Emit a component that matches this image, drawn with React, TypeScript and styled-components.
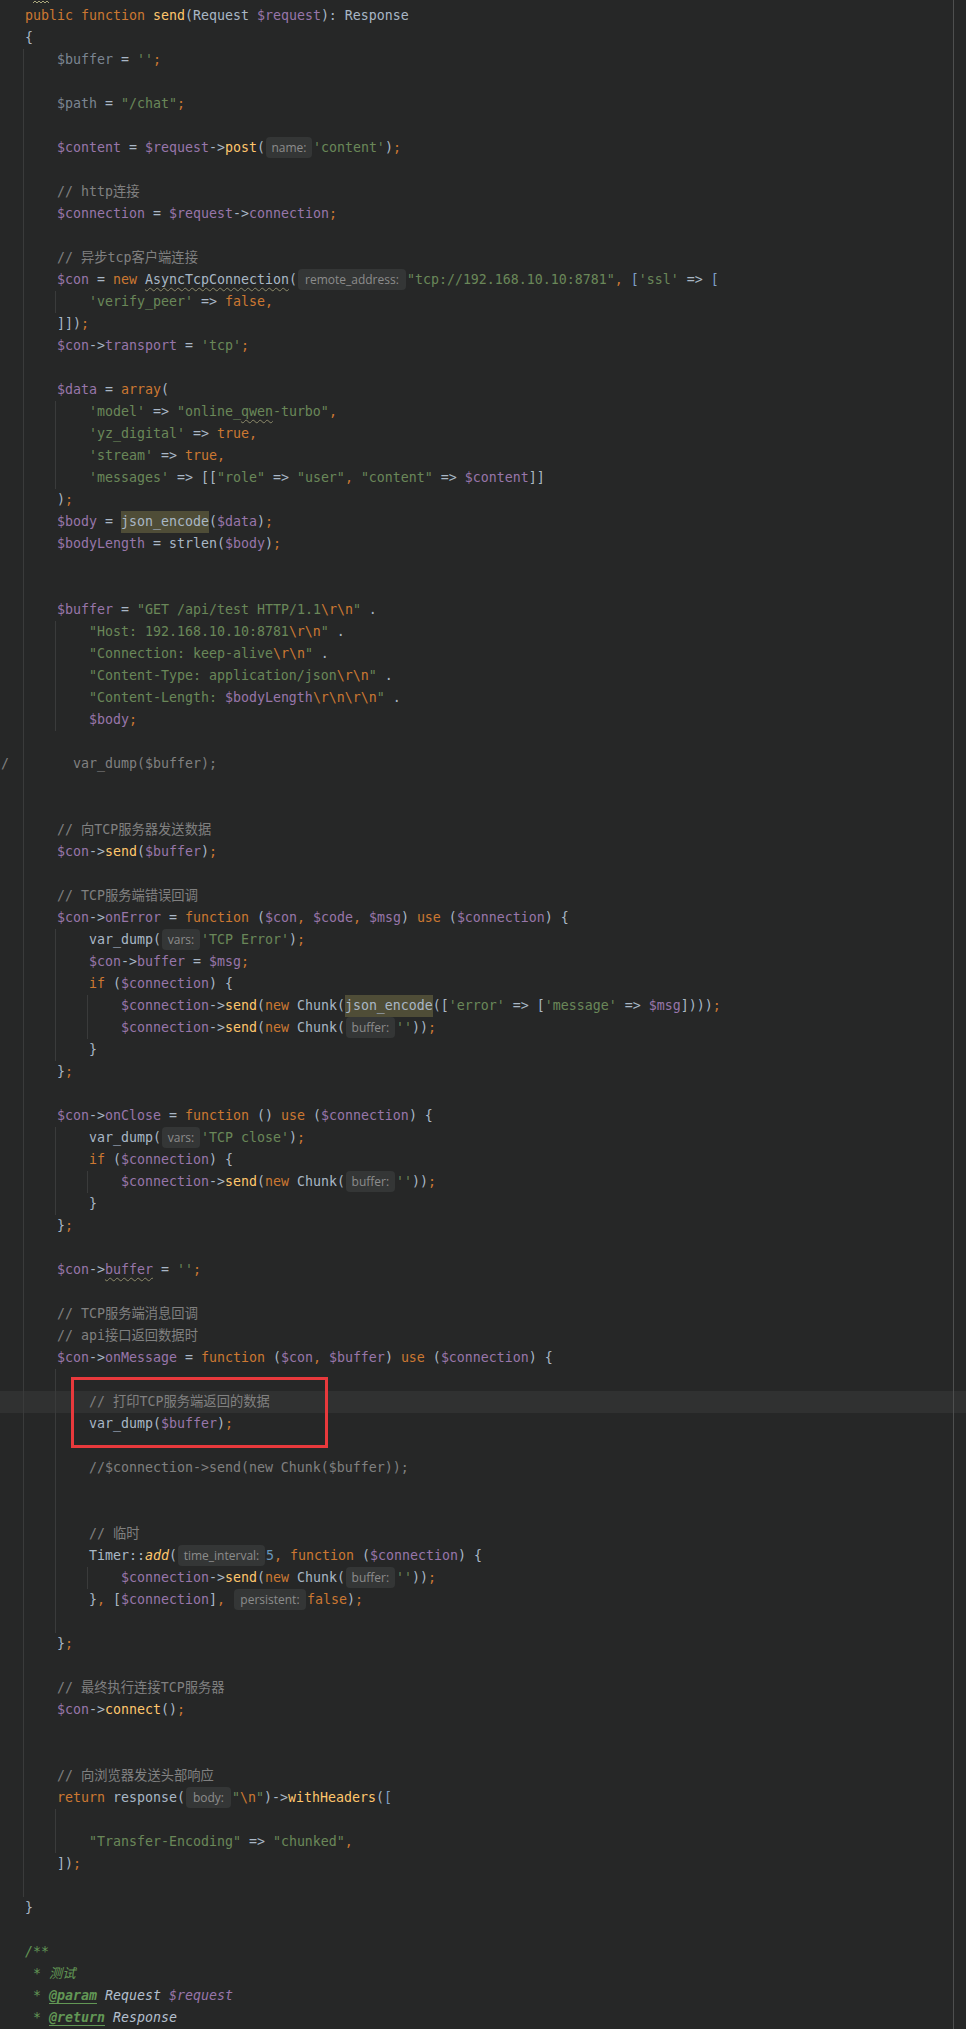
import React from 'react';
import styled, { createGlobalStyle, css } from 'styled-components';

const Global = createGlobalStyle`
  html, body { margin: 0; padding: 0; background: #262727; }
  body { width: 966px; overflow: hidden; }
`;

const Editor = styled.div`
  position: relative;
  width: 966px;
  height: 2029px;
  overflow: hidden;
  background: #262727;
  font-family: "DejaVu Sans Mono", "Noto Sans CJK SC", monospace;
  font-size: 13.29px;
  color: #a9b7c6;
  &::after {
    content: '';
    position: absolute;
    left: 953px;
    top: 0;
    bottom: 0;
    width: 1px;
    background: #4e4f4f;
  }
`;

const TopStrip = styled.div`
  height: 5px;
  display: flex;
  align-items: flex-start;
  padding-left: 33px;
`;

const Row = styled.div<{ $guides: number[]; $current?: boolean }>`
  height: 22px;
  line-height: 22px;
  padding-left: 1px;
  white-space: pre;
  background-color: ${(p) => (p.$current ? '#303131' : 'transparent')};
  background-image: ${(p) =>
    p.$guides.length ? p.$guides.map(() => 'linear-gradient(#3a3b3b, #3a3b3b)').join(', ') : 'none'};
  background-position: ${(p) => (p.$guides.length ? p.$guides.map((c) => `${c * 8 - 1}px 0`).join(', ') : '0 0')};
  background-size: 1px 100%;
  background-repeat: no-repeat;
`;

const colors: Record<string, string> = {
  k: '#cc7832',
  t: '#a9b7c6',
  v: '#9876aa',
  f: '#ffc66d',
  s: '#6a8759',
  c: '#808080',
  n: '#6897bb',
  u: '#7b8592',
  b: '#7f9fc6',
  i: '#ffc66d',
  w: '#a9b7c6',
  W: '#6a8759',
  X: '#9876aa',
  m: '#a9b7c6',
  d: '#629755',
  D: '#629755',
  I: '#b3bfcd',
  V: '#9876aa',
};

const Tok = styled.span<{ $k: string }>`
  color: ${(p) => colors[p.$k] || '#a9b7c6'};
  ${(p) =>
    (p.$k === 'i' || p.$k === 'd' || p.$k === 'I' || p.$k === 'V') &&
    css`
      font-style: italic;
    `}
  ${(p) =>
    p.$k === 'D' &&
    css`
      font-style: italic;
      font-weight: bold;
      text-decoration: underline;
      text-decoration-thickness: 1px;
      text-underline-offset: 3px;
    `}
  ${(p) =>
    (p.$k === 'w' || p.$k === 'W' || p.$k === 'X') &&
    css`
      text-decoration: underline wavy #8d8a6a;
      text-decoration-thickness: 1px;
      text-underline-offset: 3px;
    `}
  ${(p) =>
    p.$k === 'm' &&
    css`
      background: #4f4d37;
      display: inline-block;
      height: 22px;
      vertical-align: top;
    `}
`;

const Hint = styled.span<{ $w: number }>`
  display: inline-block;
  vertical-align: top;
  width: ${(p) => p.$w - 2}px;
  height: 21px;
  margin: 0 1px;
  border-radius: 4px;
  background: #343636;
  color: #8c8c8c;
  font-family: "Open Sans", "Noto Sans", sans-serif;
  font-size: 12px;
  line-height: 21px;
  text-align: center;
`;

const RedBox = styled.div`
  position: absolute;
  left: 71px;
  top: 1377px;
  width: 257px;
  height: 71px;
  box-sizing: border-box;
  border: 3px solid #e8393c;
  pointer-events: none;
`;

const hintWidths: Record<string, number> = {
  'name:': 48,
  'remote_address:': 110,
  'vars:': 40,
  'buffer:': 51,
  'time_interval:': 89,
  'persistent:': 74,
  'body:': 47,
};

type LineDef = { indent: number; toks: string[]; current?: boolean };
const L = (indent: number, ...toks: string[]): LineDef => ({ indent, toks });
const E = (): LineDef => ({ indent: 0, toks: [] });

const chunkEmpty = (ind: number) =>
  L(ind, 'v|$connection', 't|->', 'f|send', 't|(', 'k|new', 't| Chunk(', 'h|buffer:', "s|''", 't|))', 'k|;');

const lines: LineDef[] = [
  L(3, 'k|public', 't| ', 'k|function', 't| ', 'f|send', 't|(Request ', 'v|$request', 't|): Response'),
  L(3, 't|{'),
  L(7, 'u|$buffer', 't| = ', "s|''", 'k|;'),
  E(),
  L(7, 'u|$path', 't| = ', 's|"/chat"', 'k|;'),
  E(),
  L(7, 'v|$content', 't| = ', 'v|$request', 't|->', 'f|post', 't|(', 'h|name:', "s|'content'", 't|)', 'k|;'),
  E(),
  L(7, 'c|// http连接'),
  L(7, 'v|$connection', 't| = ', 'v|$request', 't|->', 'v|connection', 'k|;'),
  E(),
  L(7, 'c|// 异步tcp客户端连接'),
  L(
    7,
    'v|$con',
    't| = ',
    'k|new',
    't| ',
    'w|AsyncTcpConnection',
    't|(',
    'h|remote_address:',
    's|"tcp://192.168.10.10:8781"',
    'k|,',
    't| ',
    'b|[',
    "s|'ssl'",
    't| => ',
    'b|['
  ),
  L(11, "s|'verify_peer'", 't| => ', 'k|false', 'k|,'),
  L(7, 't|]])', 'k|;'),
  L(7, 'v|$con', 't|->', 'v|transport', 't| = ', "s|'tcp'", 'k|;'),
  E(),
  L(7, 'v|$data', 't| = ', 'k|array', 't|('),
  L(11, "s|'model'", 't| => ', 's|"online_', 'W|qwen', 's|-turbo"', 'k|,'),
  L(11, "s|'yz_digital'", 't| => ', 'k|true', 'k|,'),
  L(11, "s|'stream'", 't| => ', 'k|true', 'k|,'),
  L(
    11,
    "s|'messages'",
    't| => [[',
    's|"role"',
    't| => ',
    's|"user"',
    'k|,',
    't| ',
    's|"content"',
    't| => ',
    'v|$content',
    't|]]'
  ),
  L(7, 't|)', 'k|;'),
  L(7, 'v|$body', 't| = ', 'm|json_encode', 't|(', 'v|$data', 't|)', 'k|;'),
  L(7, 'v|$bodyLength', 't| = ', 't|strlen(', 'v|$body', 't|)', 'k|;'),
  E(),
  E(),
  L(7, 'v|$buffer', 't| = ', 's|"GET /api/test HTTP/1.1', 'k|\\r\\n', 's|"', 't| .'),
  L(11, 's|"Host: 192.168.10.10:8781', 'k|\\r\\n', 's|"', 't| .'),
  L(11, 's|"Connection: keep-alive', 'k|\\r\\n', 's|"', 't| .'),
  L(11, 's|"Content-Type: application/json', 'k|\\r\\n', 's|"', 't| .'),
  L(11, 's|"Content-Length: ', 'v|$bodyLength', 'k|\\r\\n\\r\\n', 's|"', 't| .'),
  L(11, 'v|$body', 'k|;'),
  E(),
  L(0, 'c|/        var_dump($buffer);'),
  E(),
  E(),
  L(7, 'c|// 向TCP服务器发送数据'),
  L(7, 'v|$con', 't|->', 'f|send', 't|(', 'v|$buffer', 't|)', 'k|;'),
  E(),
  L(7, 'c|// TCP服务端错误回调'),
  L(
    7,
    'v|$con',
    't|->',
    'v|onError',
    't| = ',
    'k|function',
    't| (',
    'v|$con',
    'k|,',
    't| ',
    'v|$code',
    'k|,',
    't| ',
    'v|$msg',
    't|) ',
    'k|use',
    't| (',
    'v|$connection',
    't|) {'
  ),
  L(11, 't|var_dump(', 'h|vars:', "s|'TCP Error'", 't|)', 'k|;'),
  L(11, 'v|$con', 't|->', 'v|buffer', 't| = ', 'v|$msg', 'k|;'),
  L(11, 'k|if', 't| (', 'v|$connection', 't|) {'),
  L(
    15,
    'v|$connection',
    't|->',
    'f|send',
    't|(',
    'k|new',
    't| Chunk(',
    'm|json_encode',
    't|([',
    "s|'error'",
    't| => [',
    "s|'message'",
    't| => ',
    'v|$msg',
    't|])))',
    'k|;'
  ),
  chunkEmpty(15),
  L(11, 't|}'),
  L(7, 't|}', 'k|;'),
  E(),
  L(7, 'v|$con', 't|->', 'v|onClose', 't| = ', 'k|function', 't| () ', 'k|use', 't| (', 'v|$connection', 't|) {'),
  L(11, 't|var_dump(', 'h|vars:', "s|'TCP close'", 't|)', 'k|;'),
  L(11, 'k|if', 't| (', 'v|$connection', 't|) {'),
  chunkEmpty(15),
  L(11, 't|}'),
  L(7, 't|}', 'k|;'),
  E(),
  L(7, 'v|$con', 't|->', 'X|buffer', 't| = ', "s|''", 'k|;'),
  E(),
  L(7, 'c|// TCP服务端消息回调'),
  L(7, 'c|// api接口返回数据时'),
  L(
    7,
    'v|$con',
    't|->',
    'v|onMessage',
    't| = ',
    'k|function',
    't| (',
    'v|$con',
    'k|,',
    't| ',
    'v|$buffer',
    't|) ',
    'k|use',
    't| (',
    'v|$connection',
    't|) {'
  ),
  E(),
  { indent: 11, toks: ['c|// 打印TCP服务端返回的数据'], current: true },
  L(11, 't|var_dump(', 'v|$buffer', 't|)', 'k|;'),
  E(),
  L(11, 'c|//$connection->send(new Chunk($buffer));'),
  E(),
  E(),
  L(11, 'c|// 临时'),
  L(
    11,
    't|Timer::',
    'i|add',
    't|(',
    'h|time_interval:',
    'n|5',
    'k|,',
    't| ',
    'k|function',
    't| (',
    'v|$connection',
    't|) {'
  ),
  chunkEmpty(15),
  L(11, 't|}', 'k|,', 't| [', 'v|$connection', 't|]', 'k|,', 't| ', 'h|persistent:', 'k|false', 't|)', 'k|;'),
  E(),
  L(7, 't|}', 'k|;'),
  E(),
  L(7, 'c|// 最终执行连接TCP服务器'),
  L(7, 'v|$con', 't|->', 'f|connect', 't|()', 'k|;'),
  E(),
  E(),
  L(7, 'c|// 向浏览器发送头部响应'),
  L(7, 'k|return', 't| response(', 'h|body:', 's|"', 'k|\\n', 's|"', 't|)->', 'f|withHeaders', 't|(', 'b|['),
  E(),
  L(11, 's|"Transfer-Encoding"', 't| => ', 's|"chunked"', 'k|,'),
  L(7, 't|])', 'k|;'),
  E(),
  L(3, 't|}'),
  E(),
  L(3, 'd|/**'),
  L(4, 'd|* ', 'd|测试'),
  L(4, 'd|* ', 'D|@param', 't| ', 'I|Request', 't| ', 'V|$request'),
  L(4, 'd|* ', 'D|@return', 't| ', 'I|Response'),
];

const guideRanges: [number, number, number][] = [
  [3, 3, 86],
  [7, 14, 14],
  [7, 19, 22],
  [7, 29, 33],
  [7, 43, 48],
  [7, 52, 55],
  [7, 63, 74],
  [7, 83, 84],
  [11, 46, 47],
  [11, 54, 54],
  [11, 72, 72],
];

const guidesFor = (n: number) => guideRanges.filter(([, a, b]) => n >= a && n <= b).map(([c]) => c);

const Squiggle = () => (
  <svg width="17" height="5" viewBox="0 0 17 5">
    <polyline
      points="0,3 2,1 4,3 6,1 8,3 10,1 12,3 14,1 16,3"
      fill="none"
      stroke="#a8a57c"
      strokeWidth="1"
    />
  </svg>
);

const renderTok = (tok: string, key: number) => {
  const idx = tok.indexOf('|');
  const k = tok.slice(0, idx);
  const text = tok.slice(idx + 1);
  if (k === 'h') {
    return (
      <Hint key={key} $w={hintWidths[text] || 50}>
        {text}
      </Hint>
    );
  }
  return (
    <Tok key={key} $k={k}>
      {text}
    </Tok>
  );
};

export default function App() {
  return (
    <>
      <Global />
      <Editor>
        <TopStrip>
          <Squiggle />
        </TopStrip>
        {lines.map((ln, i) => (
          <Row key={i} $guides={guidesFor(i + 1)} $current={ln.current}>
            {ln.toks.length ? ' '.repeat(ln.indent) : ''}
            {ln.toks.map(renderTok)}
          </Row>
        ))}
        <RedBox />
      </Editor>
    </>
  );
}
